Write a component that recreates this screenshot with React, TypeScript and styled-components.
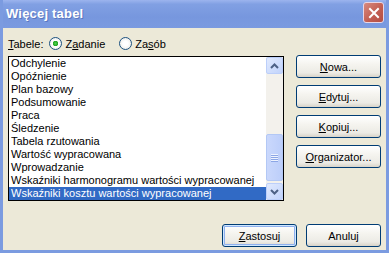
import React from "react";
import styled, { createGlobalStyle } from "styled-components";

const items = [
  "Odchylenie",
  "Opóźnienie",
  "Plan bazowy",
  "Podsumowanie",
  "Praca",
  "Śledzenie",
  "Tabela rzutowania",
  "Wartość wypracowana",
  "Wprowadzanie",
  "Wskaźniki harmonogramu wartości wypracowanej",
  "Wskaźniki kosztu wartości wypracowanej",
];

const sideButtons: [string, string][] = [
  ["N", "owa..."],
  ["E", "dytuj..."],
  ["K", "opiuj..."],
  ["O", "rganizator..."],
];

const App: React.FC = () => {
  return (
    <>
      <GlobalStyle />
      <Window>
        <TitleBar>
          <Title>Więcej tabel</Title>
          <CloseButton>
            <svg width="12" height="12" viewBox="0 0 12 12">
              <path d="M2 2 L10 10 M10 2 L2 10" stroke="#fff" strokeWidth="2" strokeLinecap="square" />
            </svg>
          </CloseButton>
        </TitleBar>
        <Body>
          <TypeRow>
            <Label>
              <u>T</u>abele:
            </Label>
            <Radio>
              <RadioDot checked />
              <span>
                Z<u>a</u>danie
              </span>
            </Radio>
            <Radio>
              <RadioDot />
              <span>
                Za<u>s</u>ób
              </span>
            </Radio>
          </TypeRow>
          <Main>
            <ListBox>
              <Items>
                {items.map((it, i) => (
                  <Item key={it} selected={i === items.length - 1}>
                    {it}
                  </Item>
                ))}
              </Items>
              <ScrollBar>
                <ArrowButton>
                  <svg width="9" height="6" viewBox="0 0 9 6">
                    <path d="M1 5 L4.5 1.5 L8 5" stroke="#4d6185" strokeWidth="2" fill="none" />
                  </svg>
                </ArrowButton>
                <Track>
                  <Thumb>
                    <Grip />
                    <Grip />
                    <Grip />
                    <Grip />
                  </Thumb>
                </Track>
                <ArrowButton>
                  <svg width="9" height="6" viewBox="0 0 9 6">
                    <path d="M1 1 L4.5 4.5 L8 1" stroke="#4d6185" strokeWidth="2" fill="none" />
                  </svg>
                </ArrowButton>
              </ScrollBar>
            </ListBox>
            <SideColumn>
              {sideButtons.map(([key, rest]) => (
                <Button key={key} wide>
                  <u>{key}</u>
                  {rest}
                </Button>
              ))}
            </SideColumn>
          </Main>
          <Footer>
            <Button isDefault>
              <u>Z</u>astosuj
            </Button>
            <Button>Anuluj</Button>
          </Footer>
        </Body>
      </Window>
    </>
  );
};

export default App;

const GlobalStyle = createGlobalStyle`
  body {
    margin: 0;
    background: #ece9d8;
    font-family: "Liberation Sans", Arial, sans-serif;
  }
`;

const Window = styled.div`
  width: 389px;
  height: 253px;
  box-sizing: border-box;
  background: #ece9d8;
  border: 3px solid #7b9be0;
  border-top: none;
  display: flex;
  flex-direction: column;
  overflow: hidden;
`;

const TitleBar = styled.div`
  height: 28px;
  margin: 0 -3px;
  background: linear-gradient(#9cb4ee 0%, #81a0e3 15%, #7797de 60%, #7a9ae0 100%);
  display: flex;
  align-items: center;
  justify-content: space-between;
  padding: 0 5px 0 6px;
  flex-shrink: 0;
`;

const Title = styled.span`
  color: #fff;
  font-weight: bold;
  font-size: 13px;
  letter-spacing: 0.2px;
  text-shadow: 1px 1px 0 #5a77bf;
  margin-top: -2px;
`;

const CloseButton = styled.div`
  width: 19px;
  height: 19px;
  margin-top: -3px;
  border: 1px solid #e8d6e6;
  border-radius: 3px;
  background: linear-gradient(135deg, #d88a80, #c15c50 60%, #b44d43);
  display: flex;
  align-items: center;
  justify-content: center;
`;

const Body = styled.div`
  flex: 1;
  padding: 8px 5px 0 5px;
  font-size: 11px;
  color: #000;
`;

const TypeRow = styled.div`
  display: flex;
  align-items: center;
  height: 15px;
`;

const Label = styled.span`
  margin-right: 6px;
`;

const Radio = styled.label`
  display: flex;
  align-items: center;
  gap: 3px;
  margin-right: 14px;
`;

const RadioDot = styled.span<{ checked?: boolean }>`
  width: 11px;
  height: 11px;
  border-radius: 50%;
  border: 1px solid #1c5180;
  background: ${(p) =>
    p.checked
      ? "radial-gradient(circle, #4ad44a 0, #21a121 2.5px, #fff 3px, #e4e4dd 100%)"
      : "radial-gradient(circle, #fff 30%, #e4e4dd 100%)"};
`;

const Main = styled.div`
  display: flex;
  align-items: flex-start;
  margin-top: 5px;
`;

const ListBox = styled.div`
  width: 276px;
  height: 145px;
  box-sizing: border-box;
  border: 1px solid #000;
  background: #fff;
  display: flex;
`;

const Items = styled.div`
  flex: 1;
  display: flex;
  flex-direction: column;
`;

const Item = styled.div<{ selected?: boolean }>`
  height: 13px;
  line-height: 13px;
  padding-left: 2px;
  white-space: nowrap;
  background: ${(p) => (p.selected ? "#316ac5" : "transparent")};
  color: ${(p) => (p.selected ? "#fff" : "#000")};
`;

const ScrollBar = styled.div`
  width: 17px;
  display: flex;
  flex-direction: column;
  background: #f3f1ec;
`;

const ArrowButton = styled.div`
  height: 17px;
  box-sizing: border-box;
  border: 1px solid #bccffa;
  border-radius: 2px;
  background: linear-gradient(135deg, #e1eafe, #c1d3fb);
  display: flex;
  align-items: center;
  justify-content: center;
`;

const Track = styled.div`
  flex: 1;
  display: flex;
  flex-direction: column;
  justify-content: flex-end;
  padding-bottom: 2px;
`;

const Thumb = styled.div`
  height: 47px;
  box-sizing: border-box;
  border: 1px solid #b3c8f5;
  border-radius: 2px;
  background: linear-gradient(90deg, #cad8fc, #bccefa);
  display: flex;
  flex-direction: column;
  align-items: center;
  justify-content: center;
  gap: 1px;
`;

const Grip = styled.span`
  width: 7px;
  height: 1px;
  background: #eef3fe;
  box-shadow: 0 1px 0 #8ca6e6;
`;

const SideColumn = styled.div`
  margin-left: 12px;
  display: flex;
  flex-direction: column;
  gap: 7px;
  margin-top: -1px;
`;

const Button = styled.button<{ wide?: boolean; isDefault?: boolean }>`
  width: ${(p) => (p.wide ? "85px" : "75px")};
  height: 23px;
  border: 1px solid #003c74;
  border-radius: 3px;
  background: linear-gradient(#ffffff 0%, #f5f4ef 40%, #ecebe5 80%, #d8d3c8 100%);
  font-family: "Liberation Sans", Arial, sans-serif;
  font-size: 11px;
  color: #000;
  padding: 0;
  box-shadow: ${(p) =>
    p.isDefault ? "inset 0 0 0 1px #cee7ff, inset 0 0 0 2px #8fb0ee" : "none"};
`;

const Footer = styled.div`
  display: flex;
  justify-content: flex-end;
  gap: 9px;
  margin-top: 23px;
  padding-right: 0;
`;
